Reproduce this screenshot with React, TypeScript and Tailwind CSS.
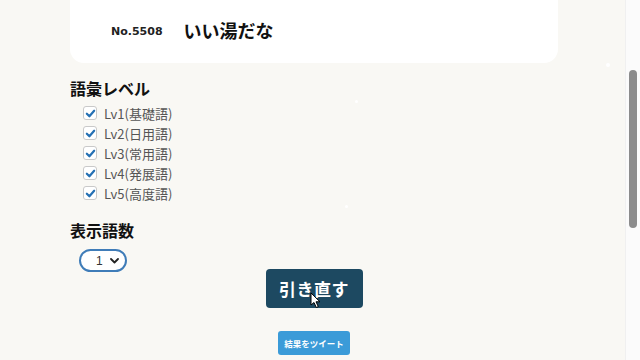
import React from "react";

const levels = ["Lv1(基礎語)", "Lv2(日用語)", "Lv3(常用語)", "Lv4(発展語)", "Lv5(高度語)"];

function Check() {
  return (
    <span className="w-[14px] h-[14px] rounded-[3px] border border-[#c9c9c9] bg-white flex items-center justify-center shrink-0">
      <svg width="11" height="11" viewBox="0 0 12 12">
        <path d="M2 6.2 L4.8 9 L10 3" fill="none" stroke="#2470b3" strokeWidth="2.4" strokeLinecap="round" strokeLinejoin="round" />
      </svg>
    </span>
  );
}

export default function App() {
  const font = { fontFamily: '"Noto Sans CJK JP", "Noto Sans", sans-serif' };
  return (
    <div className="w-[640px] h-[360px] overflow-hidden flex bg-[#f9f8f4]" style={font}>
      <div className="flex-1 relative pl-[3px]">
        <div className="w-[488px] mx-auto flex flex-col">
          <div className="h-[63px] bg-white rounded-b-[14px] flex items-center pl-[41px]">
            <span className="text-[11px] font-bold text-[#222] mt-[2px]" style={{ fontFamily: '"DejaVu Sans", sans-serif' }}>No.5508</span>
            <span className="ml-[21px] text-[18px] font-semibold text-[#111] -mt-[2px]">いい湯だな</span>
          </div>
          <div className="mt-[15px] text-[16px] font-bold text-[#111] leading-[20px]">語彙レベル</div>
          <div className="mt-[5px] pl-[13px] flex flex-col">
            {levels.map((l) => (
              <div key={l} className="h-[20px] flex items-center gap-[7px]">
                <Check />
                <span className="text-[13px] text-[#555] leading-none">{l}</span>
              </div>
            ))}
          </div>
          <div className="mt-[17px] text-[16px] font-bold text-[#111] leading-[20px]">表示語数</div>
          <div className="mt-[9px] pl-[9px]">
            <div className="w-[48px] h-[23px] rounded-full border-2 border-[#3f7cb8] bg-white flex items-center justify-between pl-[15px] pr-[6px]">
              <span className="text-[12px] text-[#333] leading-none" style={{ fontFamily: '"Liberation Sans", sans-serif' }}>1</span>
              <svg width="9" height="6" viewBox="0 0 9 6">
                <path d="M1 1 L4.5 4.5 L8 1" fill="none" stroke="#222" strokeWidth="1.8" strokeLinecap="round" strokeLinejoin="round" />
              </svg>
            </div>
          </div>
          <div className="-mt-[3px] flex justify-center">
            <div className="w-[97px] h-[39px] rounded-[4px] bg-[#1d4961] text-white text-[17px] font-bold flex items-center justify-center tracking-[0.5px]">
              引き直す
            </div>
          </div>
          <div className="mt-[23px] flex justify-center">
            <div className="w-[72px] h-[24px] rounded-[3px] bg-[#3b9bd8] text-white text-[8.5px] font-bold flex items-center justify-center">
              結果をツイート
            </div>
          </div>
        </div>
        <svg className="absolute left-[310px] top-[292px]" width="12" height="17" viewBox="0 0 12 17">
          <path d="M1 1 L1 13 L4 10.5 L6.3 15.5 L8.3 14.6 L6 9.8 L10 9.8 Z" fill="#fff" stroke="#000" strokeWidth="1" strokeLinejoin="round" />
        </svg>
        <span className="absolute left-[606px] top-[63px] w-[4px] h-[4px] rounded-full bg-white" />
        <span className="absolute left-[355px] top-[100px] w-[3px] h-[3px] rounded-full bg-white" />
        <span className="absolute left-[345px] top-[205px] w-[3px] h-[3px] rounded-full bg-white" />
      </div>
      <div className="w-[15px] h-full bg-[#fbfbfb] border-l border-[#f0f0f0] flex justify-center pt-[70px]">
        <div className="w-[8px] h-[158px] rounded-full bg-[#8c8c8c]" />
      </div>
    </div>
  );
}
